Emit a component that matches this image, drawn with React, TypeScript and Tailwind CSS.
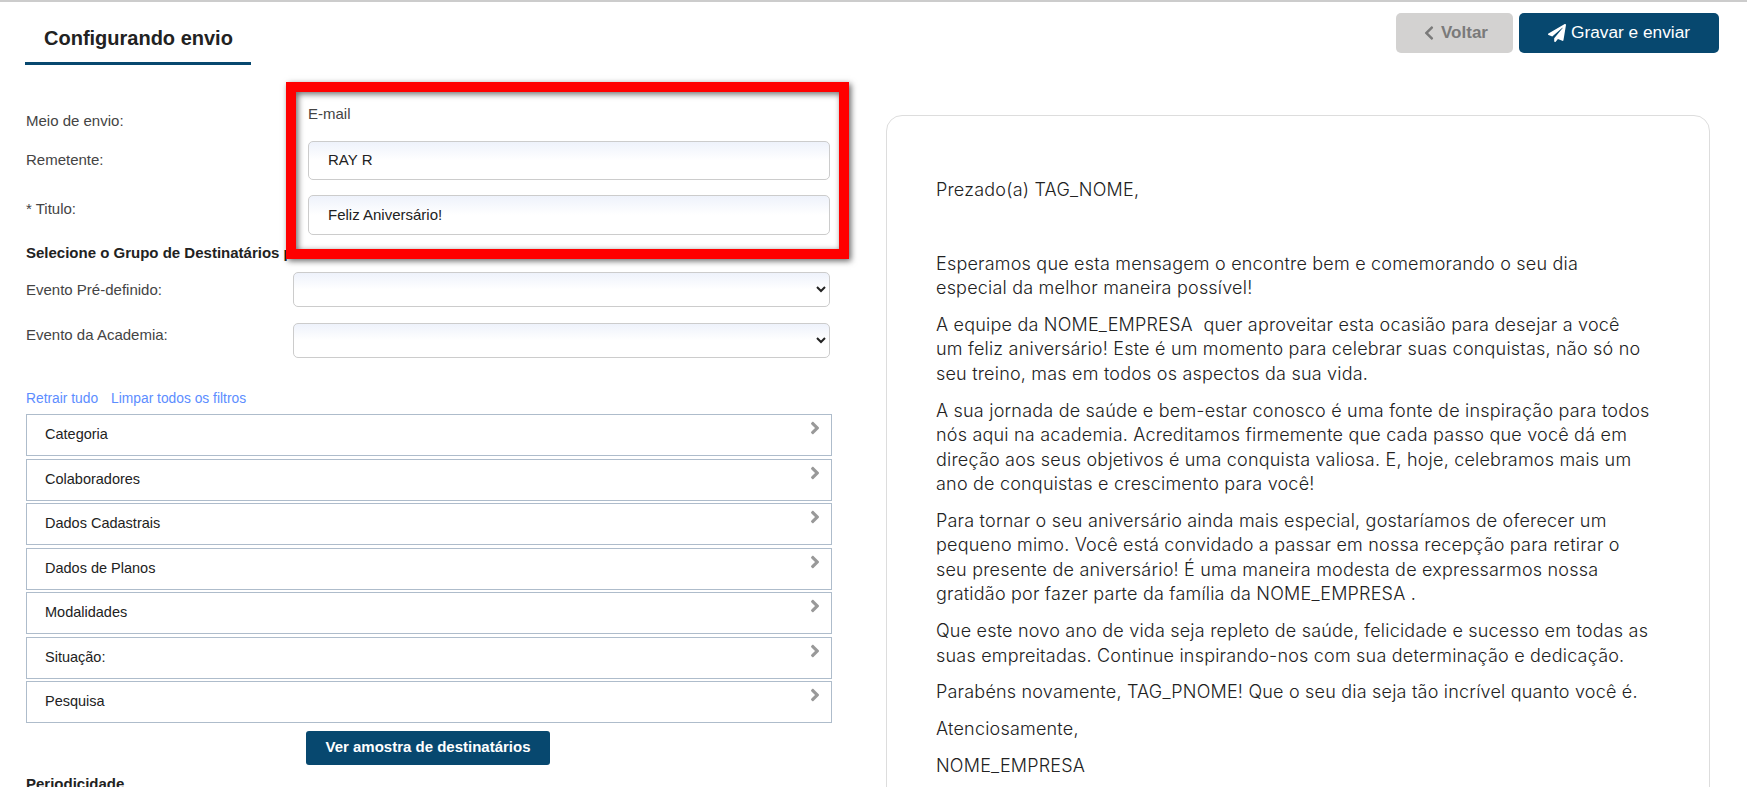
import { FaAngleRight, FaChevronLeft, FaPaperPlane } from "react-icons/fa";

const filtros = ["Categoria", "Colaboradores", "Dados Cadastrais", "Dados de Planos", "Modalidades", "Situação:", "Pesquisa"];

const campo = "w-full rounded-[5px] border border-[#ccc] bg-gradient-to-b from-[#eef2fb] to-white to-50% text-[15px] text-[#222] outline-none";

export default function App() {
  return (
    <div className="relative flex h-[787px] w-full overflow-hidden border-t-2 border-[#ccc] bg-white font-['Liberation_Sans',Arial,sans-serif] text-[15px] text-[#444]">
      {/* coluna do formulario */}
      <div className="w-[886px] shrink-0 pl-[26px] pr-[56px]">
        <div className="-ml-px flex h-[63px] w-[226px] items-center border-b-[3px] border-[#07486f] pl-[19px] pt-[11px] text-[20px] font-bold text-[#222]">
          Configurando envio
        </div>

        <div className="mt-[38px] flex h-[38px]">
          <div className="w-[267px] pt-[7px]">Meio de envio:</div>
          <div className="pl-[15px]">E-mail</div>
        </div>
        <div className="flex h-[39px]">
          <div className="w-[267px] pt-[8px]">Remetente:</div>
          <div className="flex-1 pl-[15px]">
            <input readOnly value="RAY R" className={`${campo} h-full pb-[2px] pl-[19px]`} />
          </div>
        </div>
        <div className="mt-[15px] flex h-[40px]">
          <div className="w-[267px] pt-[3px]">* Titulo:</div>
          <div className="flex-1 pl-[15px]">
            <input readOnly value="Feliz Aniversário!" className={`${campo} h-full pb-[2px] pl-[19px]`} />
          </div>
        </div>

        <div className="mt-[7px] h-[21px] font-bold text-[#222]">Selecione o Grupo de Destinatários p</div>

        <div className="mt-[9px] flex h-[35px]">
          <div className="w-[267px] pt-[7px]">Evento Pré-definido:</div>
          <select className={`${campo} h-full flex-1`} />
        </div>
        <div className="mt-[16px] flex h-[35px]">
          <div className="w-[267px] pt-[1px]">Evento da Academia:</div>
          <select className={`${campo} h-full flex-1`} />
        </div>

        <div className="mt-[31px] flex h-[20px] gap-[13px] text-[13.8px] text-[#5c8dff]">
          <span>Retrair tudo</span>
          <span>Limpar todos os filtros</span>
        </div>

        <div className="mt-[5px] w-[806px]">
          {filtros.map((nome) => (
            <div key={nome} className="mb-[2.5px] flex h-[42px] justify-between border border-[#aebccb] pl-[18px] pr-[6px] text-[14.5px] text-[#222]">
              <span className="pt-[9px]">{nome}</span>
              <FaAngleRight className="mt-[3px] text-[20px] text-[#999]" />
            </div>
          ))}
        </div>

        <div className="mt-[7.5px] flex justify-center pr-[0px]">
          <button className="h-[34px] w-[244px] rounded-[3px] bg-[#07486f] text-[15px] font-bold text-white">
            Ver amostra de destinatários
          </button>
        </div>

        <div className="mt-[8px] font-bold text-[#222]">Periodicidade</div>
      </div>

      {/* coluna da mensagem */}
      <div className="flex-1">
        <div className="mt-[11px] flex justify-end gap-[6px] pr-[28px]">
          <button className="flex h-[40px] w-[117px] items-center justify-center gap-[4px] rounded-[5px] bg-[#d3d2d1] text-[17px] font-bold text-[#7a7a7a]">
            <FaChevronLeft className="text-[16px]" />
            Voltar
          </button>
          <button className="flex h-[40px] w-[200px] items-center justify-center gap-[5px] rounded-[5px] bg-[#07486f] text-[17.3px] text-white">
            <FaPaperPlane className="text-[18px]" />
            Gravar e enviar
          </button>
        </div>

        <div className="mt-[62px] h-[800px] w-[824px] rounded-[16px] border border-[#ddd] pl-[49px] pr-[30px] pt-[62px] font-['Inter',sans-serif] text-[18px] font-light leading-[24.5px] tracking-[0.2px] text-[#222]">
          <p className="mb-[12.25px]">Prezado(a) TAG_NOME,</p>
          <p className="mb-[12.25px]">&nbsp;</p>
          <p className="mb-[12.25px]">Esperamos que esta mensagem o encontre bem e comemorando o seu dia<br />especial da melhor maneira possível!</p>
          <p className="mb-[12.25px]">A equipe da NOME_EMPRESA&nbsp; quer aproveitar esta ocasião para desejar a você<br />um feliz aniversário! Este é um momento para celebrar suas conquistas, não só no<br />seu treino, mas em todos os aspectos da sua vida.</p>
          <p className="mb-[12.25px]">A sua jornada de saúde e bem-estar conosco é uma fonte de inspiração para todos<br />nós aqui na academia. Acreditamos firmemente que cada passo que você dá em<br />direção aos seus objetivos é uma conquista valiosa. E, hoje, celebramos mais um<br />ano de conquistas e crescimento para você!</p>
          <p className="mb-[12.25px]">Para tornar o seu aniversário ainda mais especial, gostaríamos de oferecer um<br />pequeno mimo. Você está convidado a passar em nossa recepção para retirar o<br />seu presente de aniversário! É uma maneira modesta de expressarmos nossa<br />gratidão por fazer parte da família da NOME_EMPRESA .</p>
          <p className="mb-[12.25px]">Que este novo ano de vida seja repleto de saúde, felicidade e sucesso em todas as<br />suas empreitadas. Continue inspirando-nos com sua determinação e dedicação.</p>
          <p className="mb-[12.25px]">Parabéns novamente, TAG_PNOME! Que o seu dia seja tão incrível quanto você é.</p>
          <p className="mb-[12.25px]">Atenciosamente,</p>
          <p>NOME_EMPRESA</p>
        </div>
      </div>

      {/* destaque vermelho sobre os campos */}
      <div className="pointer-events-none absolute left-[286px] top-[80px] h-[177px] w-[563px] border-[10px] border-[#f00] shadow-[2px_2px_6px_rgba(0,0,0,0.6),inset_2px_2px_6px_rgba(0,0,0,0.6)]" />
    </div>
  );
}
